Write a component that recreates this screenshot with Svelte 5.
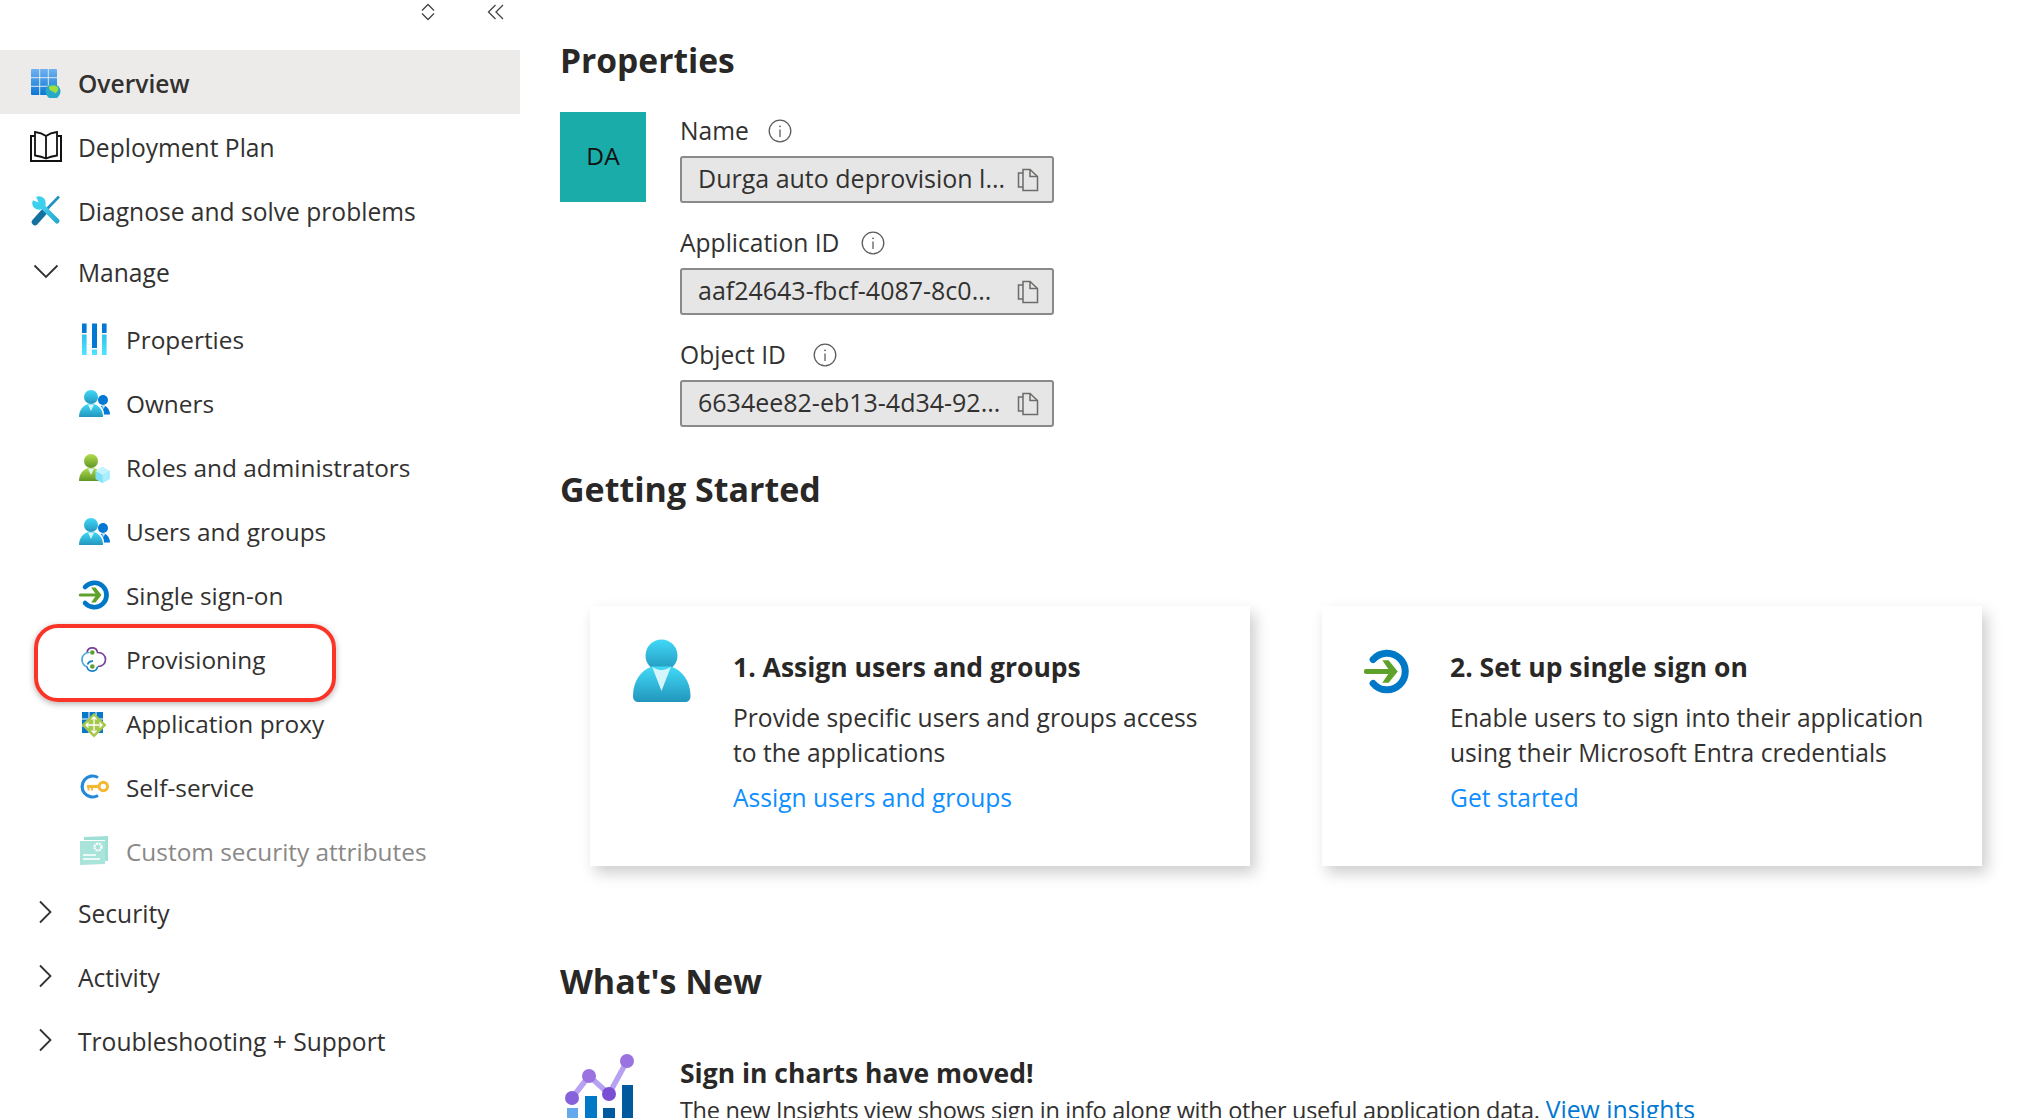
<script>
  const fields = [
    { label: 'Name', value: 'Durga auto deprovision l...', cls: 'g1' },
    { label: 'Application ID', value: 'aaf24643-fbcf-4087-8c0...', cls: 'g2' },
    { label: 'Object ID', value: '6634ee82-eb13-4d34-92...', cls: 'g3' }
  ];
</script>

{#snippet person(main, dark)}
  <circle cx="13" cy="10" r="7" fill="url(#{main})" />
  <path d="M1 30C1 23 5 18.500 10 17L16 17C21 18.500 25 23 25 30Z" fill="url(#{main})" />
  <path d="M10 17.500L16 17.500L13 24Z" fill="#d6f6fc" />
  {#if dark}
    <circle cx="25" cy="13" r="5" fill="#0078d4" />
    <path d="M25.500 18.500C29 18.800 32 23 32 27.500L26 27.500C26 24 25 21 22.500 19Z" fill="#0078d4" />
    <path d="M23.500 18.500L27.500 18.500L25.500 22Z" fill="#bfe3f8" />
  {/if}
{/snippet}

{#snippet sso()}
  <path d="M6.500 7.500A13 13 0 1 1 6.500 24.500" fill="none" stroke="#0078c8" stroke-width="5" stroke-linecap="round" />
  <path d="M1.500 16H20" stroke="#5ea12b" stroke-width="3.400" stroke-linecap="round" />
  <path d="M13 8H17.500L24 16L17.500 24H13L18.500 16Z" fill="#5ea12b" />
{/snippet}

{#snippet chevronRight()}
  <svg class="ic" viewBox="0 0 32 32"><path d="M10 5.500L20.500 16L10 26.500" fill="none" stroke="#323130" stroke-width="1.800" /></svg>
{/snippet}

{#snippet copy()}
  <svg class="copy" viewBox="0 0 22 24" aria-hidden="true">
    <path d="M6 5V1.500H13L20.500 8.500V22.500H6Z" fill="none" stroke="#6d6b69" stroke-width="1.500" />
    <path d="M6 5H1.500V19H6" fill="none" stroke="#6d6b69" stroke-width="1.500" />
    <path d="M13 1.500V8.500H20.500" fill="none" stroke="#6d6b69" stroke-width="1.500" />
  </svg>
{/snippet}

<svg class="defs" aria-hidden="true">
  <defs>
    <linearGradient id="teal" x1="0" y1="0" x2="0" y2="1"><stop offset="0" stop-color="#41d9f7" /><stop offset="1" stop-color="#2296bd" /></linearGradient>
    <linearGradient id="lime" x1="0" y1="0" x2="0" y2="1"><stop offset="0" stop-color="#b4dc4e" /><stop offset="1" stop-color="#5e9624" /></linearGradient>
    <linearGradient id="grid" x1="0" y1="0" x2="0" y2="1"><stop offset="0" stop-color="#6fb2f0" /><stop offset="1" stop-color="#0a78d2" /></linearGradient>
    <linearGradient id="bar" x1="0" y1="0" x2="0" y2="1"><stop offset="0" stop-color="#2fc3ea" /><stop offset="1" stop-color="#50e6ff" /></linearGradient>
    <linearGradient id="wrench" gradientUnits="userSpaceOnUse" x1="27" y1="27" x2="8" y2="8"><stop offset="0" stop-color="#2aa8cf" /><stop offset="1" stop-color="#4edcf6" /></linearGradient>
  </defs>
</svg>

<div class="page">
  <nav class="side">
    <div class="tools">
      <svg class="tool diamond" viewBox="0 0 16 18"><path d="M2 7.500L8 1.500L14 7.500M2 10.500L8 16.500L14 10.500" fill="none" stroke="#444" stroke-width="1.300" /></svg>
      <svg class="tool dbl" viewBox="0 0 18 16"><path d="M8.500 1L1.500 8L8.500 15M16 1L9 8L16 15" fill="none" stroke="#444" stroke-width="1.300" /></svg>
    </div>

    <a class="row active">
      <svg class="ic" viewBox="0 0 32 32">
        <rect x="1" y="3" width="26" height="26" rx="1" fill="url(#grid)" />
        <path d="M9.700 3V29M18.300 3V29M1 11.700H27M1 20.300H27" stroke="#dfe7f0" stroke-width="1" />
        <circle cx="23" cy="25.500" r="7.500" fill="#27a9c9" />
        <path d="M19 20.500C22 19 26 19.300 28 21.500C29 23 27.500 25.500 26 27C25 28 24.500 26 23 25.500C21 25.500 18.500 23 19 20.500Z" fill="#9fdc3e" />
      </svg>
      <span>Overview</span>
    </a>

    <a class="row">
      <svg class="ic" viewBox="0 0 32 32">
        <path d="M4.500 6H1V31H31V6H27.500" fill="none" stroke="#111" stroke-width="2" />
        <path d="M16 6C13 3.800 9 2.500 5 2V25.500C9 26 13 27 16 28.500C19 27 23 26 27 25.500V2C23 2.500 19 3.800 16 6ZM16 6V28.500" fill="#fff" stroke="#111" stroke-width="1.800" />
      </svg>
      <span>Deployment Plan</span>
    </a>

    <a class="row">
      <svg class="ic" viewBox="0 0 32 32">
        <path d="M29 2.500L17 15" stroke="#1f93c4" stroke-width="2.600" />
        <path d="M5 28L14 18" stroke="#15729f" stroke-width="6.500" stroke-linecap="round" />
        <path d="M10 10L27 27" stroke="url(#wrench)" stroke-width="5" stroke-linecap="round" />
        <circle cx="9" cy="9" r="6.800" fill="#3ccfee" />
        <path d="M8.500 8.500L1 5.500L1 1L5.500 1Z" fill="#fff" />
      </svg>
      <span>Diagnose and solve problems</span>
    </a>

    <a class="row head">
      <svg class="ic" viewBox="0 0 32 32"><path d="M4.500 10.500L16 22L27.500 10.500" fill="none" stroke="#323130" stroke-width="1.800" /></svg>
      <span>Manage</span>
    </a>

    <div class="children">
      <a class="row child">
        <svg class="ic" viewBox="0 0 32 32">
          <path d="M4 0.500H8.600V10H4ZM14 0.500H19V25H14ZM24 0.500H28.600V10H24Z" fill="#0078d4" />
          <path d="M4 11.500H8.600V32H4ZM14 26.500H19V32H14ZM24 11.500H28.600V32H24Z" fill="url(#bar)" />
        </svg>
        <span>Properties</span>
      </a>
      <a class="row child">
        <svg class="ic" viewBox="0 0 32 32">{@render person('teal', true)}</svg>
        <span>Owners</span>
      </a>
      <a class="row child">
        <svg class="ic" viewBox="0 0 32 32">
          {@render person('lime', false)}
          <path d="M24.500 16L31.500 20V28L24.500 32L17.500 28V20Z" fill="#7fe0f7" />
          <path d="M24.500 24L31.500 20V28L24.500 32Z" fill="#a8eefc" />
          <path d="M17.500 20L24.500 16L31.500 20L24.500 24Z" fill="#c4f4fd" />
        </svg>
        <span>Roles and administrators</span>
      </a>
      <a class="row child">
        <svg class="ic" viewBox="0 0 32 32">{@render person('teal', true)}</svg>
        <span>Users and groups</span>
      </a>
      <a class="row child">
        <svg class="ic" viewBox="-1 -1 34 34">{@render sso()}</svg>
        <span>Single sign-on</span>
      </a>
      <a class="row child">
        <svg class="ic" viewBox="0 0 32 32" fill="none">
          <path d="M9 9.500A5.300 5.300 0 0 1 19.500 9.500H20C24.500 9.500 27.500 12.500 27.500 16.500C27.500 20.500 24.500 23.500 20 23.500" stroke="#7a3f97" stroke-width="1.700" />
          <path d="M11.500 9.500H11C7 9.500 4 12.500 4 16.500C4 20.500 6.500 23.500 9 23.500" stroke="#4aa8dc" stroke-width="1.700" />
          <path d="M9 23.500A5.300 5.300 0 0 0 19.500 23.500M9.500 21.500A5.300 5.300 0 0 1 15 18.200" stroke="#1280c8" stroke-width="1.700" />
          <circle cx="14.300" cy="9.500" r="2.300" fill="#5ea12b" />
          <circle cx="14.300" cy="23.500" r="2.300" fill="#5ea12b" />
        </svg>
        <span>Provisioning</span>
      </a>
      <a class="row child">
        <svg class="ic" viewBox="0 0 32 32">
          <rect x="4" y="5" width="21" height="21" fill="#0a78c8" />
          <path d="M11 5V26M18 5V26M4 12H25M4 19H25" stroke="#fff" stroke-width="1" />
          <path d="M16 6L28.500 18L16 30.500L3.500 18Z" fill="#a6c84a" />
          <path d="M16 10V26M8 18H24M13.500 12.500L16 10L18.500 12.500M13.500 23.500L16 26L18.500 23.500M10.500 15.500L8 18L10.500 20.500M21.500 15.500L24 18L21.500 20.500" fill="none" stroke="#fff" stroke-width="1.300" />
        </svg>
        <span>Application proxy</span>
      </a>
      <a class="row child">
        <svg class="ic" viewBox="0 0 32 32" fill="none">
          <path d="M20 6.500A10.500 10.500 0 1 0 20 24.500" stroke="#2489d8" stroke-width="3.200" />
          <path d="M9 15.500H22" stroke="#f4b731" stroke-width="3.200" />
          <path d="M10.500 17V19.500M14 17V19.500" stroke="#f4b731" stroke-width="1.800" />
          <circle cx="25.300" cy="15.500" r="4.200" stroke="#f4b731" stroke-width="3" fill="#fff" />
        </svg>
        <span>Self-service</span>
      </a>
      <a class="row child muted">
        <svg class="ic" viewBox="0 0 32 32">
          <path d="M6 2L30 1V26H27V5L6 5Z" fill="#9ee0d6" />
          <path d="M2 6H27V29L2 30Z" fill="#a9e4db" />
          <path d="M5 20H18M5 24H22" stroke="#fff" stroke-width="1.600" />
          <circle cx="20" cy="12" r="3.500" fill="none" stroke="#fff" stroke-width="2.200" stroke-dasharray="2 0.800" />
        </svg>
        <span>Custom security attributes</span>
      </a>
    </div>

    <a class="row head sec">
      {@render chevronRight()}
      <span>Security</span>
    </a>
    <a class="row">
      {@render chevronRight()}
      <span>Activity</span>
    </a>
    <a class="row">
      {@render chevronRight()}
      <span>Troubleshooting + Support</span>
    </a>

    <div class="callout"></div>
  </nav>

  <main class="main">
    <h2 class="first">Properties</h2>

    <section class="props">
      <div class="avatar">DA</div>
      <div class="fields">
        {#each fields as f}
          <div class="field">
            <div class="label {f.cls}">
              <span>{f.label}</span>
              <svg class="info" viewBox="0 0 24 24">
                <circle cx="12" cy="12" r="10.800" fill="none" stroke="#605e5c" stroke-width="1.300" />
                <path d="M12 10.500V18" stroke="#605e5c" stroke-width="1.300" />
                <circle cx="12" cy="7.300" r="0.900" fill="#605e5c" />
              </svg>
            </div>
            <div class="input">
              <span>{f.value}</span>
              {@render copy()}
            </div>
          </div>
        {/each}
      </div>
    </section>

    <h2 class="started">Getting Started</h2>

    <section class="cards">
      <article class="card">
        <div class="card-icon">
          <svg class="big-person" viewBox="0 0 58 64">
            <circle cx="28.500" cy="16.500" r="16" fill="url(#teal)" />
            <path d="M0 57C0 42 8 31 19 27.500L38 27.500C49 31 57.500 42 57.500 57C57.500 61 55 63 52 63H6C2 63 0 61 0 57Z" fill="url(#teal)" />
            <path d="M19 27.500C24 32 33 32 38 27.500L28.500 52Z" fill="#d4f5fc" />
          </svg>
        </div>
        <div class="card-body">
          <h3>1. Assign users and groups</h3>
          <p>Provide specific users and groups access<br />to the applications</p>
          <a class="link">Assign users and groups</a>
        </div>
      </article>
      <article class="card second">
        <div class="card-icon">
          <svg class="big-sso" viewBox="0 0 32 32">{@render sso()}</svg>
        </div>
        <div class="card-body">
          <h3>2. Set up single sign on</h3>
          <p>Enable users to sign into their application<br />using their Microsoft Entra credentials</p>
          <a class="link">Get started</a>
        </div>
      </article>
    </section>

    <h2 class="whatsnew">What's New</h2>

    <section class="news">
      <svg class="chart" viewBox="0 0 70 80">
        <path d="M7 44L24 22L44 40L62 7" fill="none" stroke="#b6a1f2" stroke-width="5.500" />
        <rect x="2" y="54" width="11" height="26" fill="#63a9ec" />
        <rect x="20" y="42" width="12" height="38" fill="#0078c8" />
        <rect x="38" y="54" width="12" height="26" fill="#005a9e" />
        <rect x="57" y="31" width="11" height="49" fill="#005a9e" />
        <circle cx="7" cy="44" r="7" fill="#8661d9" />
        <circle cx="24" cy="22" r="7" fill="#9a73e0" />
        <circle cx="44" cy="40" r="7" fill="#7a4fd4" />
        <circle cx="62" cy="7" r="7" fill="#9a73e0" />
      </svg>
      <div class="news-body">
        <h3>Sign in charts have moved!</h3>
        <p><span class="tight">The new Insights view shows sign in info along with other useful application data.</span> <a class="blue">View insights</a></p>
      </div>
    </section>
  </main>
</div>

<style>
  :global(body) {
    margin: 0;
    background: #fff;
  }
  .defs {
    display: block;
    width: 0;
    height: 0;
  }
  .page {
    display: flex;
    width: 2032px;
    height: 1118px;
    overflow: hidden;
    font-family: "Open Sans", "Noto Sans", sans-serif;
    color: #323130;
    font-size: 24.6px;
  }
  .side {
    position: relative;
    flex: 0 0 520px;
  }
  .tools {
    display: flex;
    justify-content: flex-end;
    align-items: center;
    gap: 51px;
    height: 50px;
    padding: 0 15px 26px 0;
    box-sizing: border-box;
  }
  .tool {
    display: block;
  }
  .diamond {
    width: 16px;
    height: 18px;
  }
  .dbl {
    width: 18px;
    height: 16px;
  }
  .row {
    display: flex;
    align-items: center;
    gap: 16px;
    height: 64px;
    padding-left: 30px;
    white-space: nowrap;
  }
  .row > span {
    padding-top: 2px;
  }
  .active {
    background: #edebe9;
    font-weight: 600;
  }
  .head {
    height: 58px;
  }
  .sec {
    margin-bottom: 3px;
  }
  .children {
    margin-top: 7px;
    font-size: 24.4px;
  }
  .child {
    padding-left: 78px;
  }
  .child > span {
    padding-top: 1px;
  }
  .muted {
    color: #8a8886;
  }
  .ic {
    display: block;
    flex: 0 0 32px;
    width: 32px;
    height: 32px;
  }
  .callout {
    position: absolute;
    left: 34px;
    top: 624px;
    width: 302px;
    height: 78px;
    box-sizing: border-box;
    border: 4px solid #fa3528;
    border-radius: 24px;
    box-shadow: 0 2px 6px rgba(0, 0, 0, 0.3);
  }
  .main {
    flex: 1;
    padding-left: 40px;
  }
  h2 {
    margin: 0;
    height: 40px;
    line-height: 40px;
    font-size: 34px;
    font-weight: 700;
    color: #292827;
  }
  .first {
    margin-top: 40px;
    font-size: 33.6px;
  }
  .props {
    display: flex;
    gap: 34px;
    margin-top: 32px;
  }
  .avatar {
    display: flex;
    align-items: center;
    justify-content: center;
    width: 86px;
    height: 90px;
    background: #1aaca8;
    color: #111;
    font-size: 24.5px;
    padding-bottom: 4px;
    box-sizing: border-box;
  }
  .fields {
    display: flex;
    flex-direction: column;
    gap: 22px;
    width: 374px;
    margin-top: 1px;
  }
  .label {
    display: flex;
    align-items: center;
    height: 36px;
    margin-bottom: 7px;
  }
  .label > span {
    padding-bottom: 1px;
  }
  .g1 { gap: 19px; }
  .g2 { gap: 21.5px; }
  .g3 { gap: 27.5px; }
  .info {
    display: block;
    width: 24px;
    height: 24px;
  }
  .input {
    display: flex;
    align-items: center;
    justify-content: space-between;
    box-sizing: border-box;
    height: 47px;
    padding: 0 13px 0 16px;
    background: #e6e6e6;
    border: 2px solid #8a8a8a;
    border-radius: 3px;
    white-space: nowrap;
    font-size: 25px;
  }
  .input > span {
    padding-bottom: 3px;
  }
  .copy {
    display: block;
    width: 22px;
    height: 24px;
    flex: none;
  }
  .started {
    margin-top: 42px;
  }
  .cards {
    display: flex;
    gap: 72px;
    margin: 97px 0 0 30px;
  }
  .card {
    display: flex;
    box-sizing: border-box;
    width: 660px;
    height: 260px;
    background: #fff;
    box-shadow: 5px 7px 14px rgba(0, 0, 0, 0.2);
  }
  .card-icon {
    flex: 0 0 143px;
    padding: 33px 0 0 43px;
    box-sizing: border-box;
  }
  .second .card-icon {
    flex: 0 0 128px;
    padding: 43px 0 0 42px;
  }
  .big-person {
    display: block;
    width: 58px;
    height: 64px;
  }
  .big-sso {
    display: block;
    width: 45px;
    height: 45px;
  }
  .card-body {
    padding-top: 41px;
  }
  h3 {
    margin: 0;
    font-size: 26.5px;
    font-weight: 700;
    line-height: 40px;
    color: #292827;
  }
  .card p {
    margin: 13px 0 0;
    line-height: 35px;
  }
  .link {
    display: block;
    margin-top: 10px;
    line-height: 35px;
    color: #0f8fff;
  }
  .whatsnew {
    margin-top: 95px;
  }
  .news {
    display: flex;
    gap: 45px;
    margin: 53px 0 0 5px;
  }
  .chart {
    display: block;
    flex: none;
    width: 70px;
    height: 80px;
  }
  .news-body h3 {
    line-height: 38px;
  }
  .news p {
    margin: 0;
    font-size: 23.5px;
    line-height: 35px;
    white-space: nowrap;
  }
  .tight {
    letter-spacing: -0.32px;
  }
  .blue {
    color: #0078d4;
    font-size: 24.8px;
  }
</style>
